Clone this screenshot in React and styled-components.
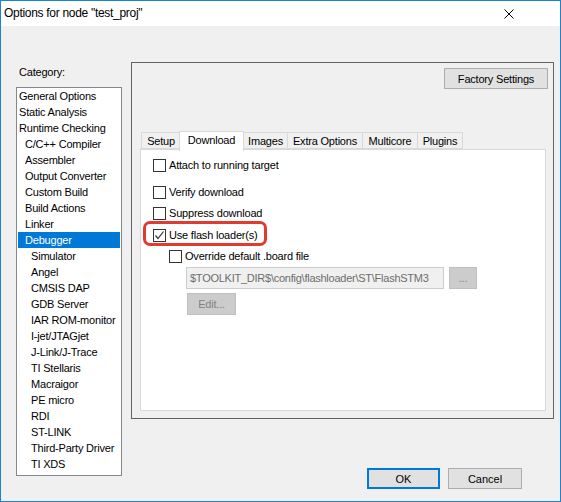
import React from 'react';
import styled, { createGlobalStyle } from 'styled-components';

const GlobalStyle = createGlobalStyle`
  html, body {
    margin: 0;
    padding: 0;
    background: #ffffff;
  }
  body {
    font-family: "Liberation Sans", Arial, sans-serif;
    color: #000;
  }
  * {
    box-sizing: border-box;
  }
`;

const categories = [
  ['General Options', 0],
  ['Static Analysis', 0],
  ['Runtime Checking', 0],
  ['C/C++ Compiler', 1],
  ['Assembler', 1],
  ['Output Converter', 1],
  ['Custom Build', 1],
  ['Build Actions', 1],
  ['Linker', 1],
  ['Debugger', 1],
  ['Simulator', 2],
  ['Angel', 2],
  ['CMSIS DAP', 2],
  ['GDB Server', 2],
  ['IAR ROM-monitor', 2],
  ['I-jet/JTAGjet', 2],
  ['J-Link/J-Trace', 2],
  ['TI Stellaris', 2],
  ['Macraigor', 2],
  ['PE micro', 2],
  ['RDI', 2],
  ['ST-LINK', 2],
  ['Third-Party Driver', 2],
  ['TI XDS', 2],
];

const tabs = [
  ['Setup', 40],
  ['Download', 65],
  ['Images', 45],
  ['Extra Options', 76],
  ['Multicore', 56],
  ['Plugins', 46],
];

const Checkbox = ({ checked }) => (
  <Box>
    {checked ? (
      <svg width="11" height="11" viewBox="0 0 11 11">
        <polyline
          points="1.5,5.5 4,8.5 9.5,1.5"
          fill="none"
          stroke="#333"
          strokeWidth="1.2"
        />
      </svg>
    ) : null}
  </Box>
);

const App = () => {
  return (
    <>
      <GlobalStyle />
      <Window>
        <TitleBar>
          <Title>Options for node "test_proj"</Title>
          <CloseIcon width="10" height="10" viewBox="0 0 10 10">
            <path d="M0.5 0.5 L9.5 9.5 M9.5 0.5 L0.5 9.5" stroke="#000" strokeWidth="1" />
          </CloseIcon>
        </TitleBar>
        <Body>
          <LeftColumn>
            <Label>Category:</Label>
            <List>
              {categories.map(([name, level]) => (
                <Item key={name} level={level} selected={name === 'Debugger'}>
                  {name}
                </Item>
              ))}
            </List>
          </LeftColumn>
          <RightColumn>
            <Panel>
              <TopBar>
                <Button width={104}>Factory Settings</Button>
              </TopBar>
              <TabRow>
                {tabs.map(([name, w], i) => (
                  <Tab key={name} width={w} first={i === 0} selected={name === 'Download'}>
                    {name}
                  </Tab>
                ))}
              </TabRow>
              <Page>
                <Row>
                  <Checkbox />
                  <RowText>Attach to running target</RowText>
                </Row>
                <Row top={11}>
                  <Checkbox />
                  <RowText>Verify download</RowText>
                </Row>
                <Row top={5}>
                  <Checkbox />
                  <RowText>Suppress download</RowText>
                </Row>
                <Row top={6}>
                  <Checkbox checked />
                  <RowText>Use flash loader(s)</RowText>
                </Row>
                <Row top={5} indent={16}>
                  <Checkbox />
                  <RowText>Override default .board file</RowText>
                </Row>
                <FieldRow>
                  <PathField>
                    <PathText>$TOOLKIT_DIR$\config\flashloader\ST\FlashSTM3</PathText>
                  </PathField>
                  <DisabledButton width={28}>...</DisabledButton>
                </FieldRow>
                <EditRow>
                  <DisabledButton width={49}>Edit...</DisabledButton>
                </EditRow>
                <Highlight />
              </Page>
            </Panel>
            <Footer>
              <DialogButton primary>OK</DialogButton>
              <DialogButton>Cancel</DialogButton>
            </Footer>
          </RightColumn>
        </Body>
      </Window>
    </>
  );
};

const Window = styled.div`
  width: 561px;
  height: 502px;
  border: 1px solid #1883d7;
  display: flex;
  flex-direction: column;
  background: #f0f0f0;
`;

const TitleBar = styled.div`
  height: 25px;
  background: #ffffff;
  display: flex;
  align-items: center;
  justify-content: space-between;
  padding-left: 3px;
  padding-right: 46px;
`;

const Title = styled.div`
  font-size: 12px;
  letter-spacing: -0.3px;
  padding-bottom: 1px;
`;

const CloseIcon = styled.svg`
  display: block;
  margin-top: 1px;
`;

const Body = styled.div`
  flex: 1;
  display: flex;
  align-items: flex-start;
  gap: 9px;
  padding: 36px 0 0 15px;
  font-size: 11px;
  letter-spacing: -0.2px;
`;

const LeftColumn = styled.div`
  width: 106px;
  display: flex;
  flex-direction: column;
`;

const Label = styled.div`
  height: 13px;
  line-height: 13px;
  margin: 4px 0 8px 3px;
`;

const List = styled.div`
  height: 389px;
  border: 1px solid #828790;
  background: #ffffff;
  padding: 0 1px;
`;

const Item = styled.div`
  height: 16px;
  line-height: 16px;
  padding-left: ${({ level }) => 1 + level * 6}px;
  white-space: nowrap;
  background: ${({ selected }) => (selected ? '#0078d7' : 'transparent')};
  color: ${({ selected }) => (selected ? '#ffffff' : '#000000')};
`;

const RightColumn = styled.div`
  width: 423px;
  display: flex;
  flex-direction: column;
`;

const Panel = styled.div`
  height: 357px;
  border: 1px solid #646464;
  padding: 5px 7px 6px 8px;
  display: flex;
  flex-direction: column;
`;

const TopBar = styled.div`
  display: flex;
  justify-content: flex-end;
  margin-right: -2px;
  margin-bottom: 42px;
`;

const Button = styled.div`
  width: ${({ width }) => width}px;
  height: 21px;
  background: #e1e1e1;
  border: 1px solid #adadad;
  display: flex;
  align-items: center;
  justify-content: center;
`;

const TabRow = styled.div`
  height: 19px;
  display: flex;
  align-items: flex-end;
  padding-left: 1px;
  margin-bottom: -1px;
  position: relative;
  z-index: 1;
`;

const Tab = styled.div`
  width: ${({ width }) => width}px;
  height: ${({ selected }) => (selected ? 20 : 17)}px;
  margin-left: ${({ first, selected }) => (first ? 0 : selected ? -2 : -1)}px;
  margin-bottom: ${({ selected }) => (selected ? -1 : 1)}px;
  border: 1px solid #d9d9d9;
  border-bottom: ${({ selected }) => (selected ? 'none' : '1px solid #d9d9d9')};
  background: ${({ selected }) => (selected ? '#ffffff' : '#f0f0f0')};
  position: relative;
  z-index: ${({ selected }) => (selected ? 2 : 1)};
  display: flex;
  align-items: center;
  justify-content: center;
  padding-bottom: ${({ selected }) => (selected ? 3 : 0)}px;
  white-space: nowrap;
`;

const Page = styled.div`
  height: 262px;
  background: #ffffff;
  border: 1px solid #d9d9d9;
  padding: 7px 0 0 12px;
  position: relative;
`;

const Row = styled.div`
  height: 16px;
  display: flex;
  align-items: center;
  margin-top: ${({ top }) => top || 0}px;
  padding-left: ${({ indent }) => indent || 0}px;
`;

const Box = styled.div`
  width: 13px;
  height: 13px;
  border: 1px solid #333333;
  background: #ffffff;
  flex-shrink: 0;
  display: flex;
  align-items: center;
  justify-content: center;
`;

const RowText = styled.span`
  margin-left: 3px;
  white-space: nowrap;
`;

const FieldRow = styled.div`
  display: flex;
  gap: 5px;
  margin-top: 3px;
  padding-left: 33px;
`;

const PathField = styled.div`
  width: 258px;
  height: 22px;
  line-height: 20px;
  background: #f0f0f0;
  border: 1px solid #cccccc;
  color: #6d6d6d;
  padding-left: 3px;
  overflow: hidden;
`;

const PathText = styled.span`
  white-space: nowrap;
  letter-spacing: -0.25px;
`;

const DisabledButton = styled.div`
  width: ${({ width }) => width}px;
  height: 22px;
  background: #cccccc;
  border: 1px solid #bfbfbf;
  color: #838383;
  display: flex;
  align-items: center;
  justify-content: center;
`;

const EditRow = styled.div`
  display: flex;
  margin-top: 4px;
  padding-left: 34px;
`;

const Highlight = styled.div`
  position: absolute;
  left: 2px;
  top: 71px;
  width: 124px;
  height: 25px;
  border: 3px solid #e23a2f;
  border-radius: 7px;
`;

const Footer = styled.div`
  display: flex;
  justify-content: flex-end;
  gap: 8px;
  margin-top: 49px;
  padding-right: 32px;
  letter-spacing: 0;
`;

const DialogButton = styled.div`
  width: ${({ primary }) => (primary ? 73 : 74)}px;
  height: 21px;
  background: #e1e1e1;
  border: ${({ primary }) => (primary ? '2px solid #0078d7' : '1px solid #adadad')};
  display: flex;
  align-items: center;
  justify-content: center;
`;

export default App;
